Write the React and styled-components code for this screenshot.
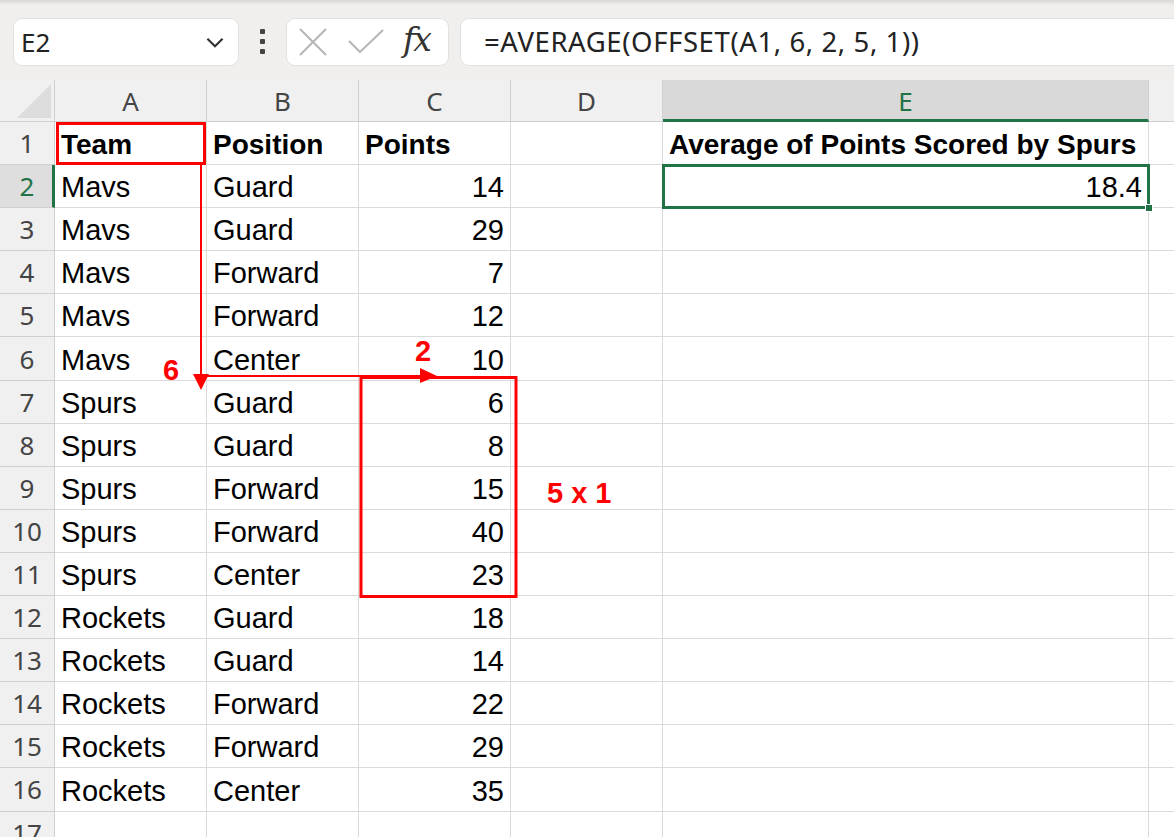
import React from 'react';
import styled, { createGlobalStyle } from 'styled-components';

const GlobalStyle = createGlobalStyle`
	html, body {
		margin: 0;
		padding: 0;
		background: #ffffff;
		overflow: hidden;
	}
	* {
		box-sizing: border-box;
	}
`;

const columns = [
	{ key: 'A', width: 152 },
	{ key: 'B', width: 152 },
	{ key: 'C', width: 152 },
	{ key: 'D', width: 152 },
	{ key: 'E', width: 486 },
	{ key: 'F', width: 40 },
];

const rows = [
	['Team', 'Position', 'Points', '', 'Average of Points Scored by Spurs'],
	['Mavs', 'Guard', 14, '', 18.4],
	['Mavs', 'Guard', 29],
	['Mavs', 'Forward', 7],
	['Mavs', 'Forward', 12],
	['Mavs', 'Center', 10],
	['Spurs', 'Guard', 6],
	['Spurs', 'Guard', 8],
	['Spurs', 'Forward', 15],
	['Spurs', 'Forward', 40],
	['Spurs', 'Center', 23],
	['Rockets', 'Guard', 18],
	['Rockets', 'Guard', 14],
	['Rockets', 'Forward', 22],
	['Rockets', 'Forward', 29],
	['Rockets', 'Center', 35],
	[],
];

const App = () => {
	return (
		<>
			<GlobalStyle />
			<Page>
				<TopBar>
					<NameBox>
						<NameText>E2</NameText>
						<Chevron viewBox="0 0 24 24">
							<path d="M5 9 L12 16 L19 9" />
						</Chevron>
					</NameBox>
					<Dots>
						<span />
						<span />
						<span />
					</Dots>
					<FxBox>
						<CancelIcon viewBox="0 0 28 28">
							<path d="M1 1 L27 27 M27 1 L1 27" />
						</CancelIcon>
						<EnterIcon viewBox="0 0 36 24">
							<path d="M1 12 L12 23 L35 1" />
						</EnterIcon>
						<FxLabel>fx</FxLabel>
					</FxBox>
					<FormulaBox>=AVERAGE(OFFSET(A1, 6, 2, 5, 1))</FormulaBox>
				</TopBar>

				<Sheet>
					<Corner>
						<CornerTri />
					</Corner>
					{columns.map((c) => (
						<ColHeader key={c.key} selected={c.key === 'E'}>
							{c.key !== 'F' ? c.key : ''}
						</ColHeader>
					))}
					{rows.map((r, i) => (
						<React.Fragment key={i}>
							<RowHeader selected={i === 1}>{i + 1}</RowHeader>
							{columns.map((c, j) => {
								const v = r[j];
								const isNum = typeof v === 'number';
								return (
									<Cell key={c.key} bold={i === 0} numeric={isNum}>
										{v === undefined ? '' : v}
									</Cell>
								);
							})}
						</React.Fragment>
					))}

					<ActiveCell>
						<FillHandle />
					</ActiveCell>

					<Overlay viewBox="0 0 1174 757">
						<rect x="57.5" y="43.5" width="147" height="40" fill="none" stroke="#ff0000" strokeWidth="3" />
						<line x1="201" y1="85" x2="201" y2="298" stroke="#ff0000" strokeWidth="2" />
						<polygon points="193,294 209,294 201,310" fill="#ff0000" />
						<line x1="201" y1="296" x2="422" y2="296" stroke="#ff0000" strokeWidth="2" />
						<polygon points="420,288 420,303 437,296" fill="#ff0000" />
						<rect x="361" y="297.5" width="155" height="219" fill="none" stroke="#ff0000" strokeWidth="3" />
					</Overlay>
					<Note style={{ left: 163, top: 276 }}>6</Note>
					<Note style={{ left: 415, top: 257 }}>2</Note>
					<Note style={{ left: 547, top: 399 }}>5 x 1</Note>
				</Sheet>
			</Page>
		</>
	);
};

export default App;

/* Styles --- */

const Page = styled.div`
	width: 1174px;
	height: 837px;
	overflow: hidden;
	background: #ffffff;
`;

const TopBar = styled.div`
	height: 80px;
	display: flex;
	align-items: center;
	padding: 3px 0 0 13px;
	background: #f1efed;
	box-shadow: inset 0 5px 4px -3px rgba(0, 0, 0, 0.12);
`;

const BoxBase = styled.div`
	height: 48px;
	background: #ffffff;
	border: 1px solid #e3e1df;
	border-radius: 9px;
	display: flex;
	align-items: center;
`;

const NameBox = styled(BoxBase)`
	width: 226px;
	padding: 0 10px 0 7px;
	justify-content: space-between;
`;

const NameText = styled.span`
	font-family: 'Noto Sans', sans-serif;
	font-size: 26px;
	color: #222222;
`;

const Chevron = styled.svg`
	width: 26px;
	height: 26px;
	fill: none;
	stroke: #333333;
	stroke-width: 2;
`;

const Dots = styled.div`
	width: 47px;
	display: flex;
	flex-direction: column;
	align-items: center;
	gap: 5px;
	span {
		width: 5px;
		height: 5px;
		background: #444444;
		border-radius: 1px;
	}
`;

const FxBox = styled(BoxBase)`
	width: 163px;
	padding: 0 0 0 12px;
`;

const CancelIcon = styled.svg`
	width: 28px;
	height: 28px;
	fill: none;
	stroke: #b5b5b5;
	stroke-width: 2;
`;

const EnterIcon = styled.svg`
	width: 36px;
	height: 24px;
	margin-left: 21px;
	margin-top: -2px;
	fill: none;
	stroke: #b5b5b5;
	stroke-width: 2;
`;

const FxLabel = styled.span`
	margin-left: 19px;
	font-family: 'DejaVu Serif', 'Liberation Serif', serif;
	font-style: italic;
	font-size: 33px;
	line-height: 1;
	color: #333333;
	letter-spacing: -2px;
	margin-top: -4px;
`;

const FormulaBox = styled(BoxBase)`
	flex: 1;
	margin-left: 11px;
	border-radius: 9px 0 0 9px;
	border-right: none;
	padding-left: 23px;
	font-family: 'Noto Sans', sans-serif;
	font-size: 27.5px;
	color: #222222;
	letter-spacing: 0.6px;
`;

const Sheet = styled.div`
	position: relative;
	display: grid;
	grid-template-columns: 55px 152px 152px 152px 152px 486px 40px;
	grid-template-rows: 42px repeat(17, 43.1px);
	background: #ffffff;
`;

const Corner = styled.div`
	background: #f0f0f0;
	border-right: 1px solid #d0d0d0;
	border-bottom: 1px solid #d0d0d0;
	position: relative;
`;

const CornerTri = styled.div`
	position: absolute;
	right: 3px;
	bottom: 3px;
	width: 0;
	height: 0;
	border-left: 34px solid transparent;
	border-bottom: 34px solid #dcdcdc;
`;

const ColHeader = styled.div`
	display: flex;
	align-items: center;
	justify-content: center;
	background: ${(p) => (p.selected ? '#d9d9d9' : '#f0f0f0')};
	border-right: 1px solid #d0d0d0;
	border-bottom: ${(p) => (p.selected ? '3px solid #217346' : '1px solid #d0d0d0')};
	font-family: 'Noto Sans', sans-serif;
	font-size: 26px;
	color: ${(p) => (p.selected ? '#217346' : '#444444')};
	padding-top: ${(p) => (p.selected ? '2px' : '0')};
`;

const RowHeader = styled.div`
	display: flex;
	align-items: center;
	justify-content: center;
	background: ${(p) => (p.selected ? '#dedede' : '#f0f0f0')};
	border-right: ${(p) => (p.selected ? '3px solid #217346' : '1px solid #d0d0d0')};
	border-bottom: 1px solid #d0d0d0;
	font-family: 'Noto Sans', sans-serif;
	font-size: 26px;
	color: ${(p) => (p.selected ? '#217346' : '#444444')};
	padding-left: ${(p) => (p.selected ? '2px' : '0')};
`;

const Cell = styled.div`
	display: flex;
	align-items: flex-end;
	justify-content: ${(p) => (p.numeric ? 'flex-end' : 'flex-start')};
	padding: 0 6px 5px 6px;
	border-right: 1px solid #dadada;
	border-bottom: 1px solid #dadada;
	font-family: 'Liberation Sans', Arial, sans-serif;
	font-size: ${(p) => (p.bold ? '28px' : '29px')};
	font-weight: ${(p) => (p.bold ? 700 : 400)};
	color: #000000;
	white-space: nowrap;
	overflow: hidden;
	line-height: 1;
`;

const ActiveCell = styled.div`
	position: absolute;
	left: 662px;
	top: 84px;
	width: 488px;
	height: 45px;
	border: 3px solid #217346;
	pointer-events: none;
`;

const FillHandle = styled.div`
	position: absolute;
	right: -6px;
	bottom: -6px;
	width: 8px;
	height: 8px;
	background: #217346;
	border: 1px solid #ffffff;
`;

const Overlay = styled.svg`
	position: absolute;
	left: 0;
	top: 0;
	width: 1174px;
	height: 757px;
	pointer-events: none;
`;

const Note = styled.div`
	position: absolute;
	font-family: 'Liberation Sans', Arial, sans-serif;
	font-weight: 700;
	font-size: 29px;
	color: #ff0000;
	line-height: 1;
	white-space: nowrap;
`;
